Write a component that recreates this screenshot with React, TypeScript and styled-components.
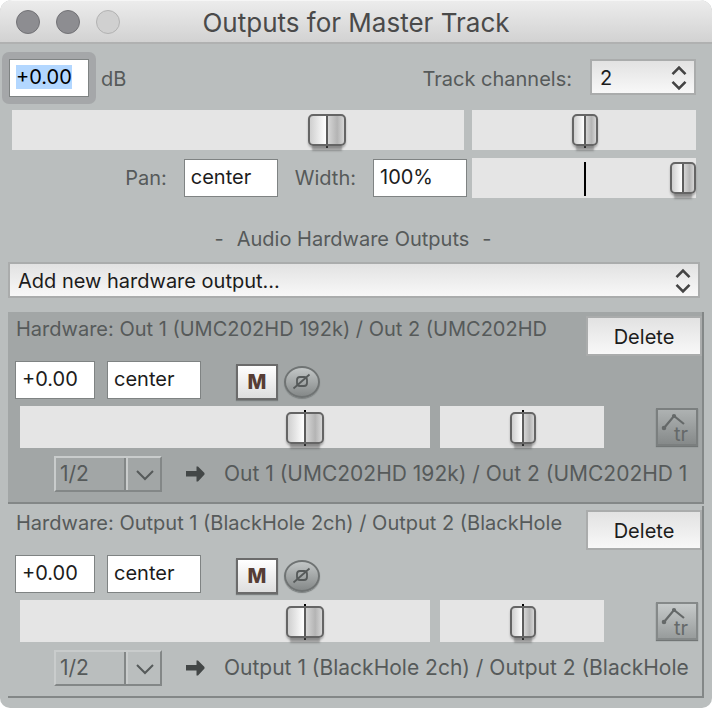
import React, { useEffect, useRef } from "react";
import styled, { createGlobalStyle, css } from "styled-components";

const GlobalStyle = createGlobalStyle`
  *, *::before, *::after { box-sizing: border-box; }
  body { margin: 0; background: #fff; }
  body, input, select, button {
    font-family: Inter, Roboto, "Liberation Sans", sans-serif;
    font-size: 20px;
    line-height: 26px;
    color: #1c1c1c;
  }
  input, select, button { margin: 0; border-radius: 0; outline: none; }
  ::selection { background: #b3d7ff; color: #000; }
`;

const Window = styled.main`
  background: #babebe;
  border-radius: 12px 12px 10px 10px;
  overflow: hidden;
  padding-bottom: 10px;
`;

const TitleBar = styled.header`
  display: grid;
  grid-template-columns: 1fr auto 1fr;
  align-items: center;
  height: 44px;
  padding: 0 16px;
  background: linear-gradient(#ececec, #d2d2d2);
  border-top: 1px solid #f6f6f6;
  border-bottom: 2px solid #b0b1b1;
`;

const Lights = styled.div`
  display: flex;
  gap: 16px;
`;

const Light = styled.button<{ $off?: boolean }>`
  width: 24px;
  height: 24px;
  padding: 0;
  border-radius: 50%;
  border: 1px solid ${(p) => (p.$off ? "#b2b2b2" : "#727276")};
  background: ${(p) => (p.$off ? "#d0d0d0" : "#8d8d91")};
`;

const Title = styled.h1`
  margin: 0;
  padding-top: 2px;
  font-size: 26px;
  line-height: 32px;
  font-weight: 400;
  color: #4a4a4a;
`;

const Label = styled.label`
  color: #565a5a;
  white-space: nowrap;
`;

const fieldStyle = css`
  height: 38px;
  padding: 0 6px 2px;
  border: 1px solid #7f8383;
  background: #fff;
`;

const Field = styled.input<{ $wide?: boolean }>`
  ${fieldStyle}
  width: ${(p) => (p.$wide ? 94 : 80)}px;
`;

const FocusRing = styled.div`
  display: flex;
  padding: 7px;
  border-radius: 7px;
  background: #a5a7a9;
`;

const TopRow = styled.div`
  display: flex;
  align-items: center;
  gap: 5px;
  padding: 8px 16px 6px 2px;

  label { padding-top: 2px; }
`;

const ChannelGroup = styled.div`
  display: flex;
  align-items: center;
  gap: 18px;
  margin-left: auto;
  padding-bottom: 2px;

  label { padding-top: 4px; }
`;

const SelectBox = styled.div<{ $width?: number }>`
  display: grid;
  align-items: center;
  width: ${(p) => (p.$width ? `${p.$width}px` : "auto")};
  height: 36px;
  border: 2px solid #aaacac;
  background: linear-gradient(#e2e2e2, #f8f8f8);

  > * { grid-area: 1 / 1; }
  > svg { justify-self: end; margin-right: 7px; pointer-events: none; }
`;

const Select = styled.select`
  appearance: none;
  width: 100%;
  height: 32px;
  padding: 2px 36px 0 8px;
  border: 0;
  background: transparent;
`;

const MasterFaders = styled.div`
  display: grid;
  grid-template-columns: 452fr 224fr;
  gap: 8px;
  padding: 0 16px 8px 12px;
`;

const PanRow = styled.div`
  display: grid;
  grid-template-columns: 455fr 224fr;
  align-items: center;
  gap: 5px;
  padding: 0 16px 0 12px;
`;

const PanFields = styled.div`
  display: flex;
  justify-content: flex-end;
  align-items: center;
  gap: 17px;
`;

const SectionTitle = styled.h2`
  display: flex;
  justify-content: center;
  gap: 13px;
  margin: 0;
  padding: 28px 6px 10px 0;
  font-size: 20px;
  line-height: 26px;
  font-weight: 400;
  color: #565a5a;
`;

const AddOutput = styled.div`
  padding: 0 12px 14px 8px;
`;

const thumbStyle = css<{ $wideThumb?: boolean }>`
  appearance: none;
  box-sizing: border-box;
  width: ${(p) => (p.$wideThumb ? 38 : 26)}px;
  height: 32px;
  border: 2px solid #656565;
  border-radius: 5px;
  background:
    linear-gradient(#5c5c5c, #5c5c5c) center / 2px 100% no-repeat,
    linear-gradient(90deg, #cfcfcf, #fafafa 42%, #fff 50%, #d8d8d8 51%, #b4b4b4 80%, #d6d6d6);
  box-shadow: 0 2px 2px rgba(90, 90, 90, 0.4), 0 9px 2px -4px rgba(70, 70, 70, 0.4);
`;

const Range = styled.input<{ $wideThumb?: boolean; $tall?: boolean; $tick: string }>`
  appearance: none;
  display: block;
  min-width: 0;
  width: 100%;
  height: ${(p) => (p.$tall ? 42 : 40)}px;
  padding: ${(p) => (p.$tall ? "6px 0 4px" : "4px 0")};
  background:
    linear-gradient(#000, #000) ${(p) => p.$tick} 4px / 2px ${(p) => (p.$tall ? 36 : 34)}px no-repeat,
    #e5e5e5;

  &::-webkit-slider-runnable-track { height: 32px; }
  &::-webkit-slider-thumb { ${thumbStyle} }
`;

const Panel = styled.section<{ $dark?: boolean }>`
  margin: 0 8px 2px;
  padding: 4px 0 10px;
  border-right: 2px solid #838787;
  border-bottom: 2px solid #838787;
  background: ${(p) => (p.$dark ? "#a2a6a6" : "#babebe")};

  &:last-child { margin-bottom: 0; }
`;

const PanelHeader = styled.div`
  display: flex;
  align-items: flex-start;
  gap: 10px;
  padding-left: 8px;
`;

const PanelName = styled.h3`
  flex: 1;
  min-width: 0;
  margin: 0;
  overflow: hidden;
  white-space: nowrap;
  font-size: 20px;
  line-height: 26px;
  font-weight: 400;
  color: #565a5a;
`;

const DeleteButton = styled.button`
  width: 116px;
  height: 40px;
  padding: 2px 0 0;
  border: 2px solid #aaacac;
  background: linear-gradient(#e2e2e2, #f8f8f8);
`;

const FieldRow = styled.div`
  display: flex;
  align-items: flex-start;
  gap: 12px;
  padding: 5px 7px;
`;

const ToggleGroup = styled.div`
  display: flex;
  align-items: center;
  gap: 6px;
  padding: 3px 0 1px 23px;
`;

const MuteButton = styled.button`
  width: 42px;
  height: 36px;
  padding: 0;
  border: 2px solid #6b6b6b;
  background: linear-gradient(#fff, #dedede);
  box-shadow: 0 1px 1px #7c8080;
  font-size: 20px;
  line-height: 30px;
  font-weight: 800;
  color: #573d35;
`;

const PhaseButton = styled.button`
  display: grid;
  place-items: center;
  width: 36px;
  height: 32px;
  padding: 0;
  border: 2px solid #6f7373;
  border-radius: 50%;
  background: linear-gradient(#c2c6c6, #858989);
  box-shadow: 0 1px 1px #7c8080;
`;

const SendFaders = styled.div`
  display: flex;
  align-items: flex-start;
  padding: 0 4px 8px 12px;
`;

const FaderPair = styled.div`
  display: grid;
  flex: 1;
  grid-template-columns: 410fr 164fr;
  gap: 10px;
  margin-right: 52px;
`;

const EnvelopeButton = styled.button<{ $dark?: boolean }>`
  display: grid;
  width: 42px;
  height: 38px;
  margin-top: 2px;
  padding: 0;
  border: 2px solid ${(p) => (p.$dark ? "#7b7f7f" : "#858989")};
  background: ${(p) =>
    p.$dark ? "linear-gradient(#aeb2b2, #868a8a)" : "linear-gradient(#c6caca, #989c9c)"};
  box-shadow: 0 1px 1px #727676;
  color: #656969;

  > * { grid-area: 1 / 1; }
`;

const EnvelopeText = styled.span`
  align-self: end;
  justify-self: end;
  padding-right: 8px;
  font-size: 20px;
  line-height: 20px;
  color: #656969;
`;

const RouteRow = styled.div`
  display: flex;
  align-items: center;
  padding-left: 46px;
`;

const RouteSelectBox = styled.div`
  display: grid;
  grid-template-columns: 1fr 36px;
  flex: none;
  width: 108px;
  height: 36px;
  border: 2px solid;
  border-color: #c9cccc #838787 #838787 #c9cccc;
`;

const RouteSelect = styled.select`
  appearance: none;
  grid-area: 1 / 1 / 2 / 3;
  height: 32px;
  padding: 0 38px 0 4px;
  border: 0;
  background: transparent;
  font-size: 21px;
  color: #565a5a;
`;

const RouteArrow = styled.span`
  grid-area: 1 / 2;
  display: grid;
  place-items: center;
  border-left: 2px solid #838787;
  box-shadow: inset 2px 0 #c9cccc;
  pointer-events: none;

  svg { margin: 2px 0 0 4px; }
`;

const ArrowSlot = styled.span`
  display: flex;
  flex: none;
  width: 38px;
  margin-left: 24px;
`;

const RouteName = styled.span`
  flex: 1;
  min-width: 0;
  overflow: hidden;
  white-space: nowrap;
  font-size: 21px;
  color: #565a5a;
`;

const UpDown = () => (
  <svg width="16" height="28" viewBox="0 0 16 28" fill="none" stroke="#444" strokeWidth="2.6">
    <path d="M1.500 11.200 8 4.600l6.500 6.600M1.500 18.800 8 25.400l6.500-6.600" />
  </svg>
);

type Output = { id: string; name: string; route: string; dark?: boolean };

const outputs: Output[] = [
  {
    id: "umc",
    name: "Out 1 (UMC202HD 192k) / Out 2 (UMC202HD",
    route: "Out 1 (UMC202HD 192k) / Out 2 (UMC202HD 1",
    dark: true,
  },
  {
    id: "blackhole",
    name: "Output 1 (BlackHole 2ch) / Output 2 (BlackHole",
    route: "Output 1 (BlackHole 2ch) / Output 2 (BlackHole",
  },
];

const HardwareOutput = ({ id, name, route, dark }: Output) => (
  <Panel $dark={dark} aria-labelledby={`${id}-name`}>
    <PanelHeader>
      <PanelName id={`${id}-name`}>Hardware: {name}</PanelName>
      <DeleteButton type="button">Delete</DeleteButton>
    </PanelHeader>
    <FieldRow>
      <Field aria-label="Send volume" defaultValue="+0.00" />
      <Field $wide aria-label="Send pan" defaultValue="center" />
      <ToggleGroup>
        <MuteButton type="button" aria-label="Mute">M</MuteButton>
        <PhaseButton type="button" aria-label="Invert phase">
          <svg width="20" height="18" viewBox="0 0 20 18" fill="none" stroke="#565a5a" strokeWidth="1.8">
            <rect x="5" y="4" width="10" height="9" rx="3" />
            <path d="M1.500 15.500 17.500 1.500" />
          </svg>
        </PhaseButton>
      </ToggleGroup>
    </FieldRow>
    <SendFaders>
      <FaderPair>
        <Range type="range" aria-label="Send volume fader" $wideThumb $tall $tick="69.7%" min={0} max={1000} defaultValue={715} />
        <Range type="range" aria-label="Send pan fader" $tall $tick="50.6%" min={0} max={1000} defaultValue={507} />
      </FaderPair>
      <EnvelopeButton type="button" $dark={dark} aria-label="Send envelopes">
        <svg width="38" height="34" viewBox="0 0 38 34" fill="none" stroke="currentColor" strokeWidth="2.200">
          <path d="M6 18 16 6 26 14" />
          <circle cx="6" cy="18" r="1.200" />
          <circle cx="16" cy="6" r="1" />
        </svg>
        <EnvelopeText>tr</EnvelopeText>
      </EnvelopeButton>
    </SendFaders>
    <RouteRow>
      <RouteSelectBox>
        <RouteSelect aria-label="Source channels">
          <option>1/2</option>
        </RouteSelect>
        <RouteArrow>
          <svg width="20" height="12" viewBox="0 0 20 12" fill="none" stroke="#565a5a" strokeWidth="2">
            <path d="M2 2 10 10 18 2" />
          </svg>
        </RouteArrow>
      </RouteSelectBox>
      <ArrowSlot>
        <svg width="19" height="16" viewBox="0 0 19 16" fill="#434747">
          <path d="M0 5h10.500V0.500h1.500L18.500 7v1.500L12 15.500H10.500V10.500H0z" />
        </svg>
      </ArrowSlot>
      <RouteName>{route}</RouteName>
    </RouteRow>
  </Panel>
);

export default function App() {
  const volume = useRef<HTMLInputElement>(null);

  useEffect(() => {
    volume.current?.focus();
    volume.current?.select();
  }, []);

  return (
    <>
      <GlobalStyle />
      <Window>
        <TitleBar>
          <Lights>
            <Light type="button" aria-label="Close" />
            <Light type="button" aria-label="Minimize" />
            <Light type="button" aria-label="Zoom" $off />
          </Lights>
          <Title>Outputs for Master Track</Title>
        </TitleBar>
        <TopRow>
          <FocusRing>
            <Field id="volume" ref={volume} defaultValue="+0.00" />
          </FocusRing>
          <Label htmlFor="volume">dB</Label>
          <ChannelGroup>
            <Label htmlFor="channels">Track channels:</Label>
            <SelectBox $width={106}>
              <Select id="channels">
                <option>2</option>
              </Select>
              <UpDown />
            </SelectBox>
          </ChannelGroup>
        </TopRow>
        <MasterFaders>
          <Range type="range" aria-label="Master volume" $wideThumb $tick="69.7%" min={0} max={1000} defaultValue={715} />
          <Range type="range" aria-label="Master pan" $tick="50.5%" min={0} max={1000} defaultValue={505} />
        </MasterFaders>
        <PanRow>
          <PanFields>
            <Label htmlFor="pan">Pan:</Label>
            <Field $wide id="pan" defaultValue="center" />
            <Label htmlFor="width">Width:</Label>
            <Field $wide id="width" defaultValue="100%" />
          </PanFields>
          <Range type="range" aria-label="Master width" $tick="50.5%" min={0} max={1000} defaultValue={1000} />
        </PanRow>
        <SectionTitle>
          <span>-</span>
          <span>Audio Hardware Outputs</span>
          <span>-</span>
        </SectionTitle>
        <AddOutput>
          <SelectBox>
            <Select aria-label="Add new hardware output">
              <option>Add new hardware output...</option>
            </Select>
            <UpDown />
          </SelectBox>
        </AddOutput>
        {outputs.map((o) => (
          <HardwareOutput key={o.id} {...o} />
        ))}
      </Window>
    </>
  );
}
